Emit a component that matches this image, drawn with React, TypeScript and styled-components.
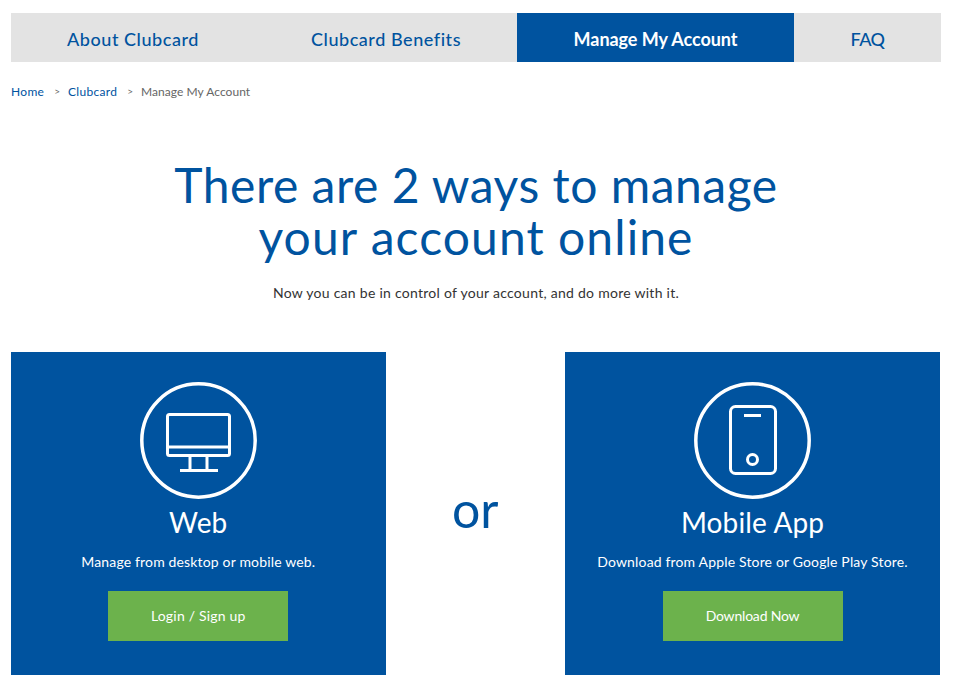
import React from "react";
import styled, { createGlobalStyle } from "styled-components";

const Global = createGlobalStyle`
  html, body { margin: 0; padding: 0; background: #fff; }
  body { font-family: "Lato", "Liberation Sans", sans-serif; }
  * { box-sizing: border-box; }
`;

const Page = styled.div`
  width: 959px;
  height: 694px;
  padding: 13px 18px 0 11px;
  overflow: hidden;
`;

const Nav = styled.nav`
  display: grid;
  grid-template-columns: 244px 262px 277px 147px;
  height: 49px;
  background: #e3e3e3;
`;

const Tab = styled.a<{ $active?: boolean; $tracking?: number }>`
  display: flex;
  align-items: center;
  justify-content: center;
  padding-top: 2px;
  font-size: 18px;
  font-weight: ${(p) => (p.$active ? 700 : 500)};
  letter-spacing: ${(p) => p.$tracking ?? 0.55}px;
  color: ${(p) => (p.$active ? "#fff" : "#00539f")};
  background: ${(p) => (p.$active ? "#00539f" : "transparent")};
`;

const Crumbs = styled.div`
  display: flex;
  align-items: center;
  height: 16px;
  margin-top: 21px;
  font-size: 12px;
`;

const Crumb = styled.a<{ $current?: boolean }>`
  color: ${(p) => (p.$current ? "#666" : "#00539f")};
  letter-spacing: ${(p) => (p.$current ? 0.05 : 0.3)}px;
`;

const Sep = styled.span`
  margin: 0 8px 0 10px;
  color: #666;
  font-size: 10px;
`;

const Heading = styled.h1`
  margin: 60px 0 0;
  text-align: center;
  font-size: 48px;
  line-height: 52px;
  font-weight: 400;
  letter-spacing: 0.55px;
  color: #00539f;
`;

const HeadingLine = styled.span<{ $tracking: number }>`
  display: block;
  letter-spacing: ${(p) => p.$tracking}px;
`;

const Lead = styled.p`
  margin: 20px 0 0;
  text-align: center;
  font-size: 14px;
  line-height: 20px;
  letter-spacing: 0.27px;
  color: #333;
`;

const Options = styled.div`
  display: grid;
  grid-template-columns: 374.5px 1fr 375px;
  margin-top: 49px;
  width: 929px;
`;

const Card = styled.section`
  display: flex;
  flex-direction: column;
  align-items: center;
  height: 323px;
  padding-top: 30px;
  background: #00539f;
  color: #fff;
`;

const IconSvg = styled.svg`
  display: block;
  flex: none;
`;

const CardTitle = styled.h2`
  margin: 6px 0 0;
  font-size: 28px;
  line-height: 34px;
  font-weight: 400;
  letter-spacing: 0.15px;
`;

const CardText = styled.p`
  margin: 13px 0 0;
  font-size: 14px;
  line-height: 20px;
  letter-spacing: 0.16px;
`;

const CardButton = styled.a<{ $tracking?: number }>`
  display: flex;
  align-items: center;
  justify-content: center;
  width: 180px;
  height: 50px;
  margin-top: 19px;
  padding-bottom: 2px;
  background: #6cb24c;
  color: #fff;
  font-size: 14px;
  letter-spacing: ${(p) => p.$tracking ?? 0.2}px;
`;

const Or = styled.div`
  display: flex;
  align-items: center;
  justify-content: center;
  padding-bottom: 10px;
  font-size: 50px;
  color: #00539f;
`;

const Desktop = () => (
  <IconSvg width="117" height="117" viewBox="0 0 117 117" fill="none" stroke="#fff" strokeLinejoin="round">
    <circle cx="58.5" cy="58.5" r="56.7" strokeWidth="3.5" />
    <g strokeWidth="3">
      <rect x="27.5" y="32.5" width="62" height="41" rx="2" />
      <path d="M27.5 65H89.5M50 73.5V88M67 73.5V88M40 88.5H78" />
    </g>
  </IconSvg>
);

const Phone = () => (
  <IconSvg width="117" height="117" viewBox="0 0 117 117" fill="none" stroke="#fff" strokeLinejoin="round">
    <circle cx="58.5" cy="58.5" r="56.7" strokeWidth="3.5" />
    <g strokeWidth="3">
      <rect x="36.5" y="24.5" width="45" height="67" rx="5" />
      <path d="M50 33.5H67" />
      <circle cx="58.5" cy="77.5" r="5" />
    </g>
  </IconSvg>
);

export default function App() {
  return (
    <>
      <Global />
      <Page>
        <Nav>
          <Tab>About Clubcard</Tab>
          <Tab>Clubcard Benefits</Tab>
          <Tab $active $tracking={-0.05}>Manage My Account</Tab>
          <Tab $tracking={-0.5}>FAQ</Tab>
        </Nav>
        <Crumbs>
          <Crumb>Home</Crumb>
          <Sep>&gt;</Sep>
          <Crumb>Clubcard</Crumb>
          <Sep>&gt;</Sep>
          <Crumb $current>Manage My Account</Crumb>
        </Crumbs>
        <Heading>
          <HeadingLine $tracking={0.52}>There are 2 ways to manage</HeadingLine>
          <HeadingLine $tracking={1.08}>your account online</HeadingLine>
        </Heading>
        <Lead>Now you can be in control of your account, and do more with it.</Lead>
        <Options>
          <Card>
            <Desktop />
            <CardTitle>Web</CardTitle>
            <CardText>Manage from desktop or mobile web.</CardText>
            <CardButton>Login / Sign up</CardButton>
          </Card>
          <Or>or</Or>
          <Card>
            <Phone />
            <CardTitle>Mobile App</CardTitle>
            <CardText>Download from Apple Store or Google Play Store.</CardText>
            <CardButton $tracking={-0.2}>Download Now</CardButton>
          </Card>
        </Options>
      </Page>
    </>
  );
}
